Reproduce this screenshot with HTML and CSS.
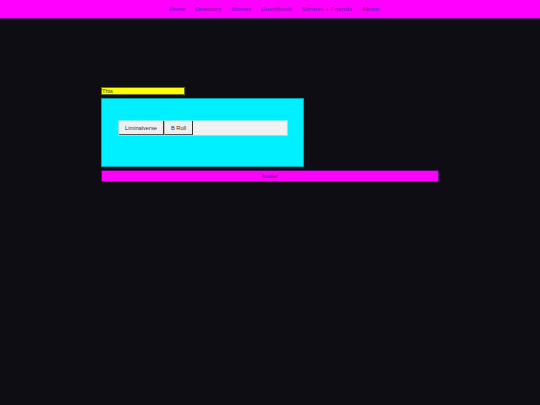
FILE: index.html
```html
<!DOCTYPE html>
<html>
<head>
<meta charset="utf-8">
<link rel="stylesheet" href="styles.css">
</head>
<body>
<nav class="nav">
  <a href="#">Home</a>
  <a href="#">Directory</a>
  <a href="#">Stories</a>
  <a href="#">Guestbook</a>
  <a href="#">Shrines + Friends</a>
  <a href="#">About</a>
</nav>
<main class="page">
  <div class="note">This</div>
  <section class="panel">
    <div class="tabs">
      <button class="tab">Liminalverse</button>
      <button class="tab">B Roll</button>
    </div>
  </section>
  <footer class="footer">footer</footer>
</main>
</body>
</html>
```
FILE: styles.css
```css
html, body {
  margin: 0;
  padding: 0;
  background: #0e0d13;
  font-family: "Liberation Sans", Arial, sans-serif;
}
.nav {
  height: 18px;
  background: #ff00ff;
  border-bottom: 1px solid #5a0a6e;
  display: flex;
  justify-content: center;
  align-items: center;
  gap: 9.5px;
  padding-left: 8px;
}
.nav a {
  color: #8a18b8;
  font-size: 6px;
  font-weight: bold;
  text-decoration: none;
}
.page {
  width: 338px;
  margin: 68px auto 0;
  display: flex;
  flex-direction: column;
  align-items: flex-start;
}
.note {
  width: 82px;
  height: 6px;
  background: #ffff00;
  border: 1px solid #6a6a00;
  font-size: 5.8px;
  line-height: 6px;
  color: #333;
  margin-bottom: 3px;
}
.panel {
  box-sizing: border-box;
  width: 203px;
  height: 69px;
  background: #00f0ff;
  border: 1px solid #07a0b0;
  padding: 21px 0 0 16px;
  margin-bottom: 3px;
}
.tabs {
  box-sizing: border-box;
  width: 170px;
  height: 16px;
  background: #f1f1f1;
  border: 1px solid #7ee8f0;
  display: flex;
}
.tab {
  margin: 0;
  height: 14px;
  background: #efefef;
  border: none;
  border-right: 1px solid #333;
  border-bottom: 1px solid #555;
  font-family: "Liberation Sans", Arial, sans-serif;
  font-size: 5.7px;
  color: #333;
  padding: 0 6px;
}
.tab + .tab {
  border-left: 1px solid #bbb;
  padding: 0 6px;
}
.footer {
  box-sizing: border-box;
  width: 338px;
  height: 12px;
  background: #ff00ff;
  border: 1px solid #5a0a6e;
  text-align: center;
  font-size: 6.2px;
  line-height: 10px;
  color: #4a1060;
}
```
